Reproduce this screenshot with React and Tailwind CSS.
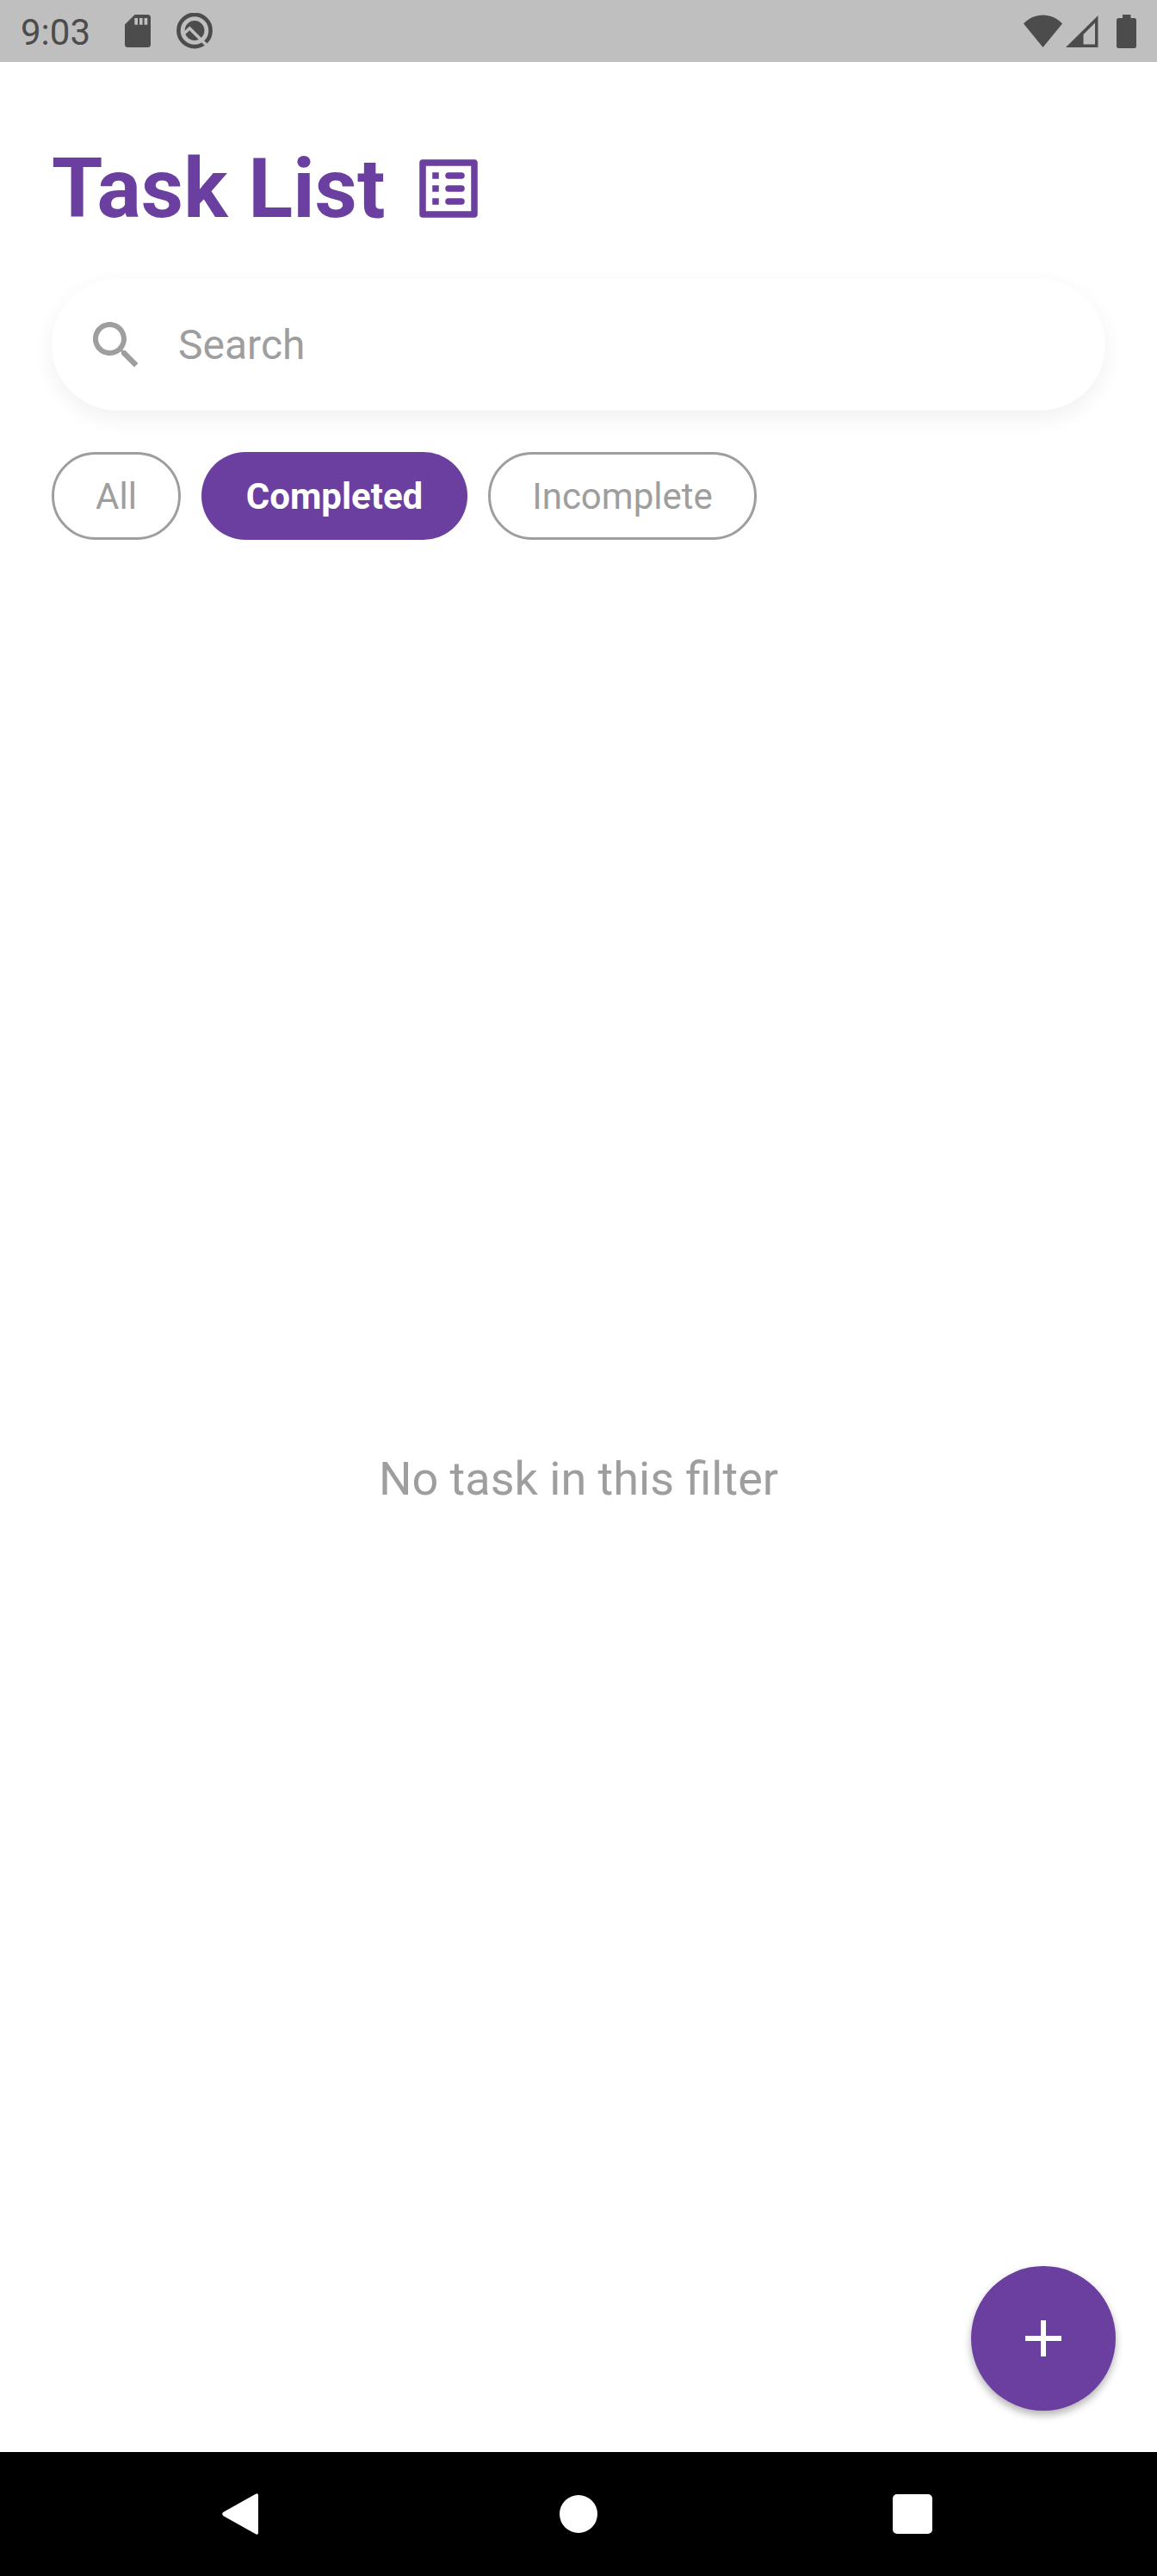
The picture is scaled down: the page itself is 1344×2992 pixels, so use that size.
import React from "react";

function SdCardIcon() {
  return (
    <svg className="h-[38px] w-[30px]" viewBox="0 0 30 38">
      <path
        fill="#4c4c4c"
        fillRule="evenodd"
        d="M11.5 0H26.5Q30 0 30 3.5V34.5Q30 38 26.500 38H3.500Q0 38 0 34.500V11.500ZM11.300 4V11.800H15V4ZM17 4V11.800H20.600V4ZM22.600 4V11.800H26.300V4Z"
      />
    </svg>
  );
}

function QIcon() {
  return (
    <svg className="h-[42px] w-[42px]" viewBox="0 0.500 42 42">
      <circle cx="21" cy="21" r="18.6" fill="none" stroke="#4c4c4c" strokeWidth="4.600" />
      <circle cx="21" cy="21" r="11.4" fill="#4c4c4c" />
      <path
        d="M8.500 24.500L15.300 18.400L36 39"
        fill="none"
        stroke="#bfbfbf"
        strokeWidth="3.600"
      />
    </svg>
  );
}

function StatusBar() {
  return (
    <header className="flex h-[72px] shrink-0 items-center bg-[#bfbfbf] pr-6 pl-6 text-[#4c4c4c]">
      <span className="w-[121px] pt-1 text-[42px] leading-[48px]">9:03</span>
      <SdCardIcon />
      <span className="ml-[30px]">
        <QIcon />
      </span>
      <div className="ml-auto flex items-center">
        <svg className="h-[38px] w-[45px]" viewBox="0 0 45 38">
          <path fill="#4c4c4c" d="M0 10.500C6 4 14 0.500 22.500 0.500S39 4 45 10.500L22.500 38Z" />
        </svg>
        <svg className="ml-1 h-[38px] w-[38px]" viewBox="0 0 38 38">
          <path
            fill="#4c4c4c"
            fillRule="evenodd"
            d="M37.500 1V38H0ZM34 9.500L20.500 23V34.500H34Z"
          />
        </svg>
        <svg className="ml-[21px] h-[39px] w-[23px]" viewBox="0 0 23 39">
          <path
            fill="#4c4c4c"
            d="M7 0H16.500V4H20.500Q23 4 23 6.500V36.500Q23 39 20.500 39H2.500Q0 39 0 36.500V6.500Q0 4 2.500 4H7Z"
          />
        </svg>
      </div>
    </header>
  );
}

function ListIcon() {
  return (
    <svg className="h-[90px] w-[90px]" viewBox="0 0 24 24" fill="currentColor">
      <path d="M19 5v14H5V5h14m1.100-2H3.900c-.5 0-.9.4-.9.9v16.200c0 .4.4.9.9.9h16.200c.4 0 .9-.5.9-.9V3.900c0-.5-.5-.9-.9-.9z" />
      {[7, 11, 15].map((y) => (
        <g key={y}>
          <rect x="7" y={y} width="2" height="2" />
          <rect x="11" y={y} width="6" height="2" rx="1" />
        </g>
      ))}
    </svg>
  );
}

function SearchBar() {
  return (
    <div className="mt-[60px] flex h-[153px] items-center rounded-full bg-white pl-[39px] text-[#9e9e9e] shadow-[0_9px_27px_rgba(0,0,0,0.06)]">
      <svg className="h-[72px] w-[72px]" viewBox="0 0 24 24" fill="currentColor">
        <path d="M15.500 14h-.79l-.28-.27C15.410 12.590 16 11.110 16 9.500 16 5.910 13.090 3 9.500 3S3 5.910 3 9.500 5.910 16 9.500 16c1.610 0 3.090-.59 4.230-1.570l.27.28v.79l5 4.990L20.490 19l-4.990-5zm-6 0C7.010 14 5 11.990 5 9.500S7.010 5 9.500 5 14 7.010 14 9.500 11.990 14 9.500 14z" />
      </svg>
      <span className="ml-9 text-5xl leading-[56px]">Search</span>
    </div>
  );
}

const chipBase =
  "flex h-[102px] items-center justify-center rounded-full pt-0.5 text-[42px] leading-[48px]";

function Filters() {
  return (
    <div className="mt-12 flex gap-6">
      <button className={`${chipBase} w-[150px] border-[3px] border-[#9e9e9e] text-[#9e9e9e]`}>
        All
      </button>
      <button className={`${chipBase} w-[309px] bg-[#6b3fa0] font-bold text-white`}>
        Completed
      </button>
      <button className={`${chipBase} w-[312px] border-[3px] border-[#9e9e9e] text-[#9e9e9e]`}>
        Incomplete
      </button>
    </div>
  );
}

function NavBar() {
  return (
    <nav className="flex h-36 shrink-0 items-center bg-black pl-[258px]">
      <svg className="h-12 w-[42px]" viewBox="0 0 42 48">
        <path
          fill="white"
          d="M42 2.500V45.500Q42 49 39 47.300L1.500 26.200Q-1.200 24 1.500 21.800L39 0.700Q42 -1 42 2.500Z"
        />
      </svg>
      <span className="ml-[350px] h-11 w-11 rounded-full bg-white" />
      <span className="ml-[343px] h-[46px] w-[46px] rounded-[5px] bg-white" />
    </nav>
  );
}

export default function App() {
  return (
    <div className="relative flex h-[2992px] w-[1344px] flex-col bg-white font-['Roboto',sans-serif]">
      <StatusBar />
      <main className="flex flex-1 flex-col px-[60px] pt-[102px]">
        <div className="flex h-[90px] items-center text-[#6b3fa0]">
          <h1 className="w-[416px] text-8xl leading-[112px] font-bold">Task List</h1>
          <ListIcon />
        </div>
        <SearchBar />
        <Filters />
        <p className="mt-[1059px] text-center text-[54px] leading-[64px] text-[#9e9e9e]">
          No task in this filter
        </p>
      </main>
      <button
        aria-label="Add task"
        className="absolute right-12 bottom-48 flex h-[168px] w-[168px] items-center justify-center rounded-full bg-[#6b3fa0] shadow-[0_5px_10px_rgba(0,0,0,0.3)]"
      >
        <svg className="h-[42px] w-[42px]" viewBox="0 0 42 42">
          <path fill="white" d="M18 0h6v18h18v6H24v18h-6V24H0v-6h18z" />
        </svg>
      </button>
      <NavBar />
    </div>
  );
}
